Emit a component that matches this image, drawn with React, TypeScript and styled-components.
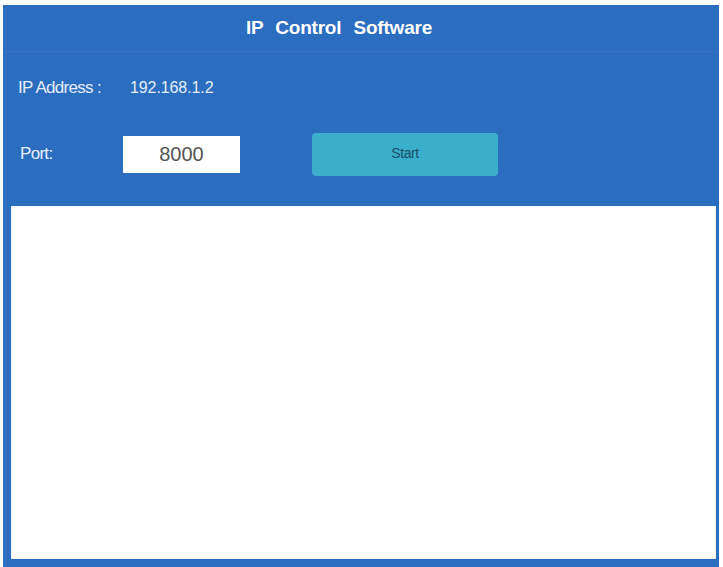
import React, { useState } from "react";
import styled, { createGlobalStyle } from "styled-components";

const GlobalStyle = createGlobalStyle`
  html, body {
    margin: 0;
    padding: 0;
    background: #ffffff;
  }
  body {
    font-family: "Liberation Sans", Arial, sans-serif;
  }
`;

const Window = styled.div`
  margin: 5px 0 0 3px;
  width: 716px;
  height: 562px;
  background-color: #2b6dbf;
  display: flex;
  flex-direction: column;
  box-sizing: border-box;
`;

const TitleBar = styled.div`
  height: 46px;
  display: flex;
  align-items: center;
  justify-content: center;
  padding-right: 44px;
  border-bottom: 1px solid #3474c2;
  flex-shrink: 0;
`;

const Title = styled.h1`
  margin: 0;
  color: #ffffff;
  font-size: 19px;
  font-weight: bold;
  word-spacing: 7px;
  letter-spacing: -0.2px;
`;

const Form = styled.div`
  display: flex;
  flex-direction: column;
  gap: 29px;
  padding: 22px 0 30px 15px;
  flex-shrink: 0;
`;

const Row = styled.div<{ $height: number }>`
  display: flex;
  align-items: center;
  height: ${(p) => p.$height}px;
`;

const Label = styled.span<{ $width: number; $offset?: number }>`
  width: ${(p) => p.$width}px;
  padding-left: ${(p) => p.$offset ?? 0}px;
  box-sizing: border-box;
  color: #e6edf8;
  font-size: 17px;
  letter-spacing: -0.7px;
  margin-top: -2px;
`;

const Value = styled.span`
  color: #e6edf8;
  font-size: 16px;
  letter-spacing: -0.1px;
  margin-top: -3px;
`;

const PortInput = styled.input`
  width: 117px;
  height: 37px;
  box-sizing: border-box;
  border: none;
  outline: none;
  background: #ffffff;
  color: #555555;
  font-family: "Liberation Sans", Arial, sans-serif;
  font-size: 20px;
  text-align: center;
  padding: 0;
`;

const StartButton = styled.button`
  margin-left: 72px;
  width: 186px;
  height: 43px;
  border: none;
  border-radius: 4px;
  background-color: #3bafc9;
  color: #1c4f6a;
  font-family: "Liberation Sans", Arial, sans-serif;
  font-size: 14px;
  letter-spacing: -0.4px;
  padding: 0 0 3px;
  cursor: pointer;
`;

const LogArea = styled.textarea`
  flex: 1;
  margin: 0 3px 8px 8px;
  border: none;
  outline: none;
  resize: none;
  background: #ffffff;
  box-shadow: inset 0 0 2px rgba(120, 140, 170, 0.35);
  font-family: "Liberation Mono", monospace;
  font-size: 13px;
  padding: 6px;
`;

export default function App() {
  const [port, setPort] = useState("8000");
  const [log, setLog] = useState("");

  return (
    <>
      <GlobalStyle />
      <Window>
        <TitleBar>
          <Title>IP Control Software</Title>
        </TitleBar>
        <Form>
          <Row $height={30}>
            <Label $width={112}>IP Address :</Label>
            <Value>192.168.1.2</Value>
          </Row>
          <Row $height={43}>
            <Label $width={105} $offset={2}>
              Port:
            </Label>
            <PortInput value={port} onChange={(e) => setPort(e.target.value)} />
            <StartButton>Start</StartButton>
          </Row>
        </Form>
        <LogArea value={log} onChange={(e) => setLog(e.target.value)} />
      </Window>
    </>
  );
}
